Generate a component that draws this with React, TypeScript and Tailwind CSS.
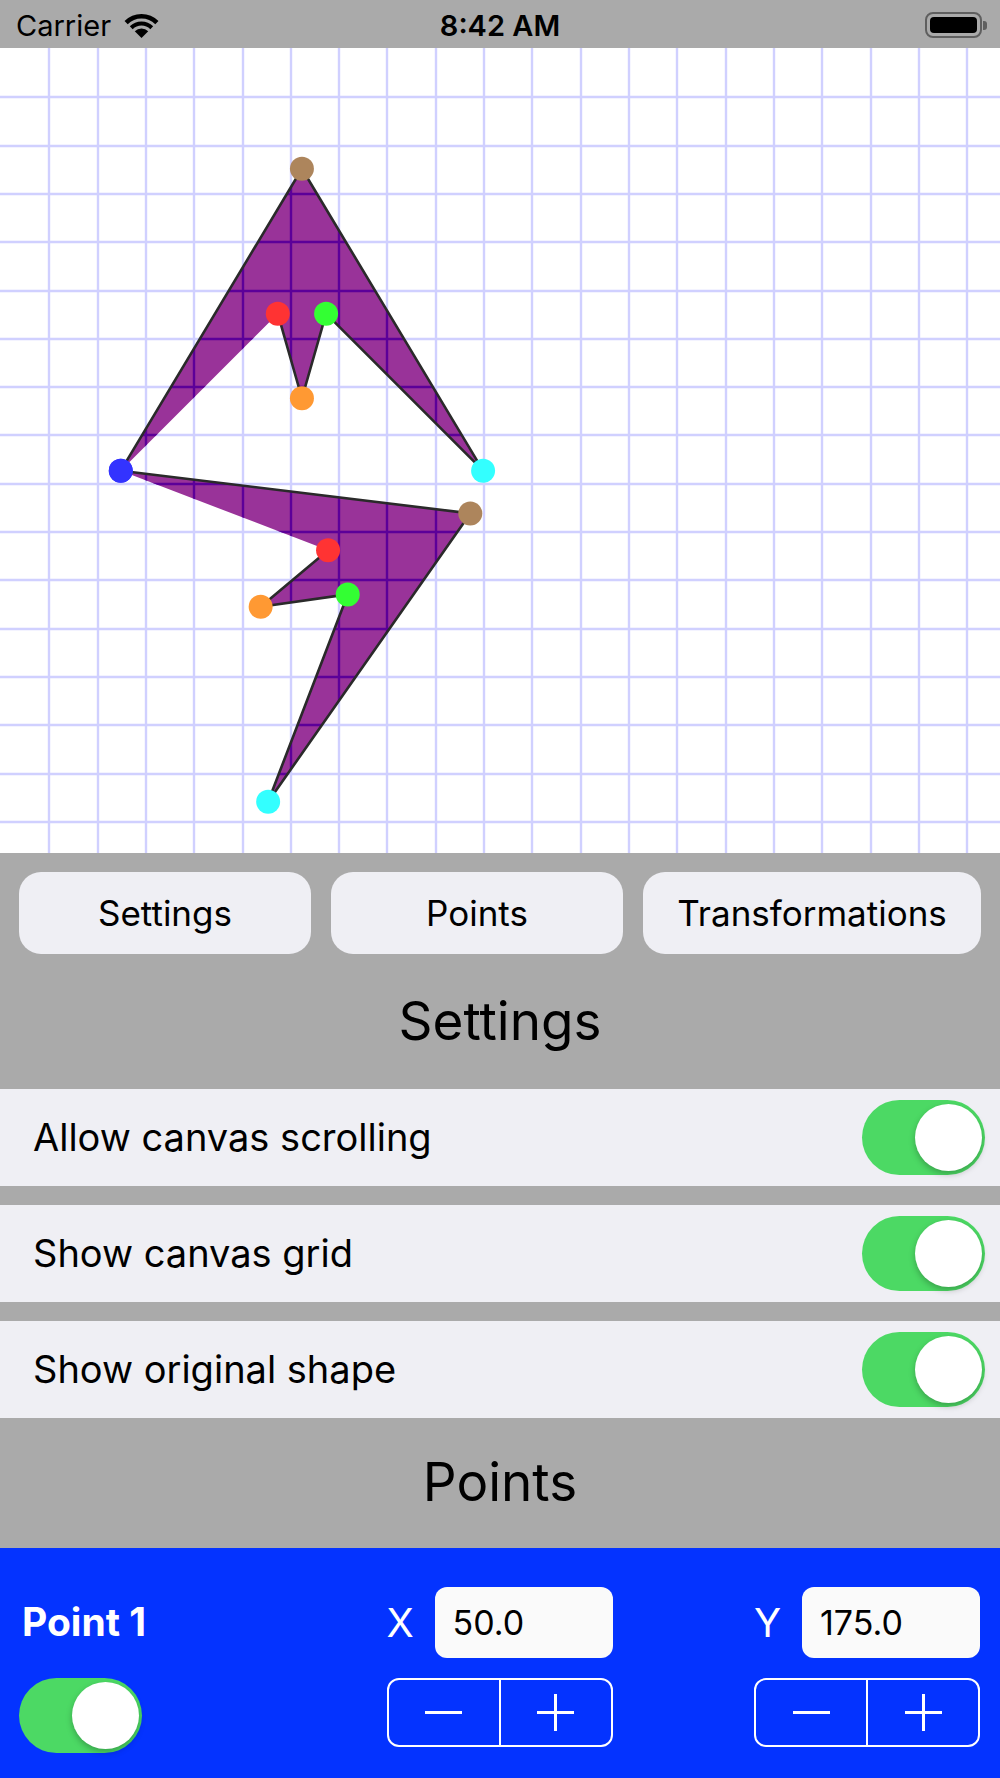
import React from "react";

const font = { fontFamily: "Inter, 'Liberation Sans', sans-serif" };

// one iOS point in screen pixels
const S = 1000 / 414;

// canvas points, in points
const shape1: [number, number][] = [
	[50, 175], // blue
	[125, 50], // brown
	[200, 175], // cyan
	[135, 110], // green
	[125, 145], // orange
	[115, 110], // red
];
const dotColors = ["#3333ff", "#ad855c", "#33ffff", "#33ff33", "#ff9933", "#ff3333"];

const rotate = (pts: [number, number][], deg: number, cx: number, cy: number) => {
	const a = (deg * Math.PI) / 180;
	return pts.map(([x, y]) => {
		const dx = x - cx;
		const dy = y - cy;
		return [cx + dx * Math.cos(a) - dy * Math.sin(a), cy + dx * Math.sin(a) + dy * Math.cos(a)] as [number, number];
	});
};

const shape2 = rotate(shape1, 66, 50, 175);
const toStr = (pts: [number, number][]) => pts.map(([x, y]) => `${x * S},${y * S}`).join(" ");

const Grid = ({ color }: { color: string }) => {
	const v = Array.from({ length: 20 }, (_, i) => Math.round((i + 1) * 20 * S) + 1);
	const h = Array.from({ length: 16 }, (_, i) => Math.round((i + 1) * 20 * S) + 1);
	return (
		<g stroke={color} strokeWidth={2.4}>
			{v.map((x) => (
				<line key={"v" + x} x1={x} y1={0} x2={x} y2={805} />
			))}
			{h.map((y) => (
				<line key={"h" + y} x1={0} y1={y} x2={1000} y2={y} />
			))}
		</g>
	);
};

const Canvas = () => (
	<div className="h-[805px] bg-white overflow-hidden">
		<svg width="1000" height="805" viewBox="0 0 1000 805">
			<defs>
				<clipPath id="shapes">
					<polygon points={toStr(shape1)} />
					<polygon points={toStr(shape2)} />
				</clipPath>
			</defs>
			<Grid color="#d0d0ff" />
			{[shape1, shape2].map((pts, i) => (
				<polygon key={"f" + i} points={toStr(pts)} fill="#993399" />
			))}
			<g clipPath="url(#shapes)">
				<Grid color="#5c0099" />
			</g>
			{[shape1, shape2].map((pts, i) => (
				<polyline
					key={"s" + i}
					points={toStr(pts)}
					fill="none"
					stroke="#2a2a2a"
					strokeWidth={2.6}
					strokeLinejoin="round"
				/>
			))}
			{[shape1, shape2].map((pts, si) =>
				pts.map(([x, y], i) => <circle key={si + "-" + i} cx={x * S} cy={y * S} r={12} fill={dotColors[i]} />)
			)}
		</svg>
	</div>
);

const Toggle = () => (
	<div className="w-[123px] h-[75px] rounded-full bg-[#4cd964] flex items-center justify-end pr-[3px]">
		<div className="w-[67px] h-[67px] rounded-full bg-white shadow-[0_3px_6px_rgba(0,0,0,0.25)]" />
	</div>
);

const Wifi = () => (
	<svg width="35" height="25" viewBox="0 0 35 25">
		<path d="M2.12 9.62 A21.75 21.75 0 0 1 32.88 9.62" fill="none" stroke="black" strokeWidth={4.5} />
		<path d="M7.25 14.75 A14.5 14.5 0 0 1 27.75 14.75" fill="none" stroke="black" strokeWidth={4} />
		<path d="M17.5 25 L10.78 18.28 A9.5 9.5 0 0 1 24.22 18.28 Z" fill="black" />
	</svg>
);

const Stepper = () => (
	<div className="h-[69px] border-2 border-white rounded-[12px] flex">
		<div className="flex-1 flex items-center justify-center">
			<svg width="37" height="37" viewBox="0 0 37 37">
				<line x1="0" y1="18.5" x2="37" y2="18.5" stroke="white" strokeWidth={3} />
			</svg>
		</div>
		<div className="w-[2px] bg-white" />
		<div className="flex-1 flex items-center justify-center">
			<svg width="37" height="37" viewBox="0 0 37 37">
				<line x1="0" y1="18.5" x2="37" y2="18.5" stroke="white" strokeWidth={3} />
				<line x1="18.5" y1="0" x2="18.5" y2="37" stroke="white" strokeWidth={3} />
			</svg>
		</div>
	</div>
);

const Coord = ({ label, value }: { label: string; value: string }) => (
	<div className="flex flex-col">
		<div className="h-[71px] flex items-center">
			<span className="w-[48px] text-white text-[40px] leading-none">{label}</span>
			<div className="flex-1 h-full rounded-[12px] bg-[#fafafa] pl-[18px] flex items-center text-[34px] text-black">
				{value}
			</div>
		</div>
		<div className="mt-[20px]">
			<Stepper />
		</div>
	</div>
);

const settings = ["Allow canvas scrolling", "Show canvas grid", "Show original shape"];

export default function App() {
	return (
		<div className="w-[1000px] h-[1778px] flex flex-col bg-[#aaaaaa]" style={font}>
			{/* status bar */}
			<div className="h-[48px] grid grid-cols-3 items-center pt-[2px]">
				<div className="flex items-center gap-[13px] pl-[16px]">
					<span className="text-[29px] text-black leading-none">Carrier</span>
					<Wifi />
				</div>
				<div className="text-center text-[29px] font-semibold text-black leading-none">8:42 AM</div>
				<div className="flex items-center justify-end pr-[13px]">
					<div className="w-[57px] h-[26px] rounded-[8px] border-[2.5px] border-[#5f5f5f] p-[3px]">
						<div className="w-full h-full rounded-[4px] bg-black" />
					</div>
					<div className="w-[4px] h-[9px] rounded-r-[3px] bg-[#5f5f5f] ml-[1px]" />
				</div>
			</div>

			<Canvas />

			{/* tabs */}
			<div className="px-[19px] pt-[19px] flex gap-[20px]">
				<button className="flex-1 h-[82px] rounded-[22px] bg-[#efeff4] text-[35px] text-black">Settings</button>
				<button className="flex-1 h-[82px] rounded-[22px] bg-[#efeff4] text-[35px] text-black">Points</button>
				<button className="w-[338px] h-[82px] rounded-[22px] bg-[#efeff4] text-[35px] text-black">
					Transformations
				</button>
			</div>

			<div className="h-[135px] flex items-center justify-center text-[53px] text-black">Settings</div>

			<div className="flex flex-col gap-[19px]">
				{settings.map((s) => (
					<div key={s} className="h-[97px] bg-[#efeff4] flex items-center justify-between pl-[33px] pr-[15px]">
						<span className="text-[38px] text-black">{s}</span>
						<Toggle />
					</div>
				))}
			</div>

			<div className="h-[130px] flex items-center justify-center text-[53px] text-black">Points</div>

			{/* point editor */}
			<div className="flex-1 bg-[#0433ff] pt-[39px] pl-[19px] pr-[20px] grid grid-cols-[226px_226px_226px] justify-between">
				<div className="flex flex-col">
					<div className="h-[71px] flex items-center pl-[3px] text-white text-[39px] font-bold">Point 1</div>
					<div className="mt-[20px]">
						<Toggle />
					</div>
				</div>
				<Coord label="X" value="50.0" />
				<Coord label="Y" value="175.0" />
			</div>
		</div>
	);
}
